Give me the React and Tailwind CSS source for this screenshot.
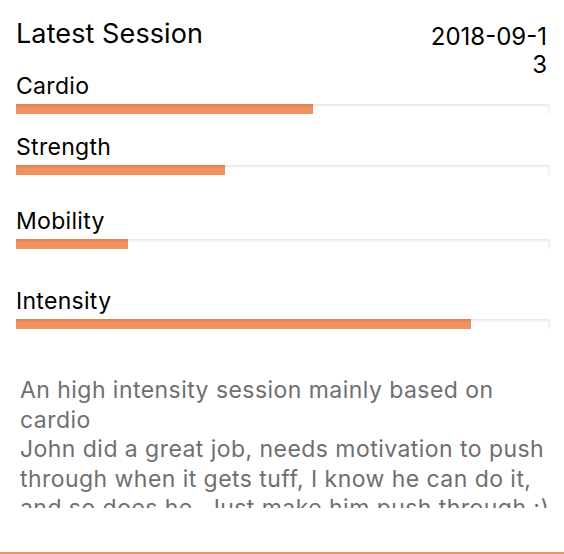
const stats = [
  { id: "cardio", label: "Cardio", value: 55.8, gap: "mt-[24px]" },
  { id: "strength", label: "Strength", value: 39.3, gap: "mt-[20px]" },
  { id: "mobility", label: "Mobility", value: 21, gap: "mt-[33px]" },
  { id: "intensity", label: "Intensity", value: 85.4, gap: "mt-[39px]" },
];

const notes = [
  "An high intensity session mainly based on",
  "cardio",
  "John did a great job, needs motivation to push",
  "through when it gets tuff, I know he can do it,",
  "and so does he. Just make him push through :)",
];

const App = () => {
  return (
    <main className="w-full h-[554px] bg-white overflow-hidden font-['Inter','Noto_Sans',sans-serif] text-black">
      {/* header */}
      <div className="flex items-start justify-between h-[49px] pt-[19px] pl-4 pr-[17px]">
        <h1 className="text-[27px] leading-[30px] font-normal tracking-[0.1px]">Latest Session</h1>
        <span className="mt-[4px] w-[122px] text-right break-all text-[24px] leading-[28px]">
          2018-09-13
        </span>
      </div>

      <div className="pl-4 pr-[14px]">
        {stats.map((stat) => (
          <div key={stat.id} className={stat.gap}>
            <p className="text-[23px] leading-[26px] tracking-[0.3px]">{stat.label}</p>
            <div className="relative mt-[5px] h-[10px] bg-white border-r border-[#ececec]">
              <div className="h-full bg-[#f29160]" style={{ width: `${stat.value}%` }} />
              <div className="absolute inset-0 shadow-[inset_0_2px_2px_rgba(0,0,0,0.09)]" />
            </div>
          </div>
        ))}
      </div>

      {/* notes, clipped like a scroll box */}
      <div className="mt-[47px] pl-5 pr-4 h-[132px] overflow-hidden text-[23px] leading-[29.5px] tracking-[0.45px] text-[#6f6f6f]">
        {notes.map((line) => (
          <p key={line} className="whitespace-nowrap">{line}</p>
        ))}
      </div>

      <div className="mt-[44px] h-[2px] bg-[#f29160]" />
    </main>
  );
};

export default App;
